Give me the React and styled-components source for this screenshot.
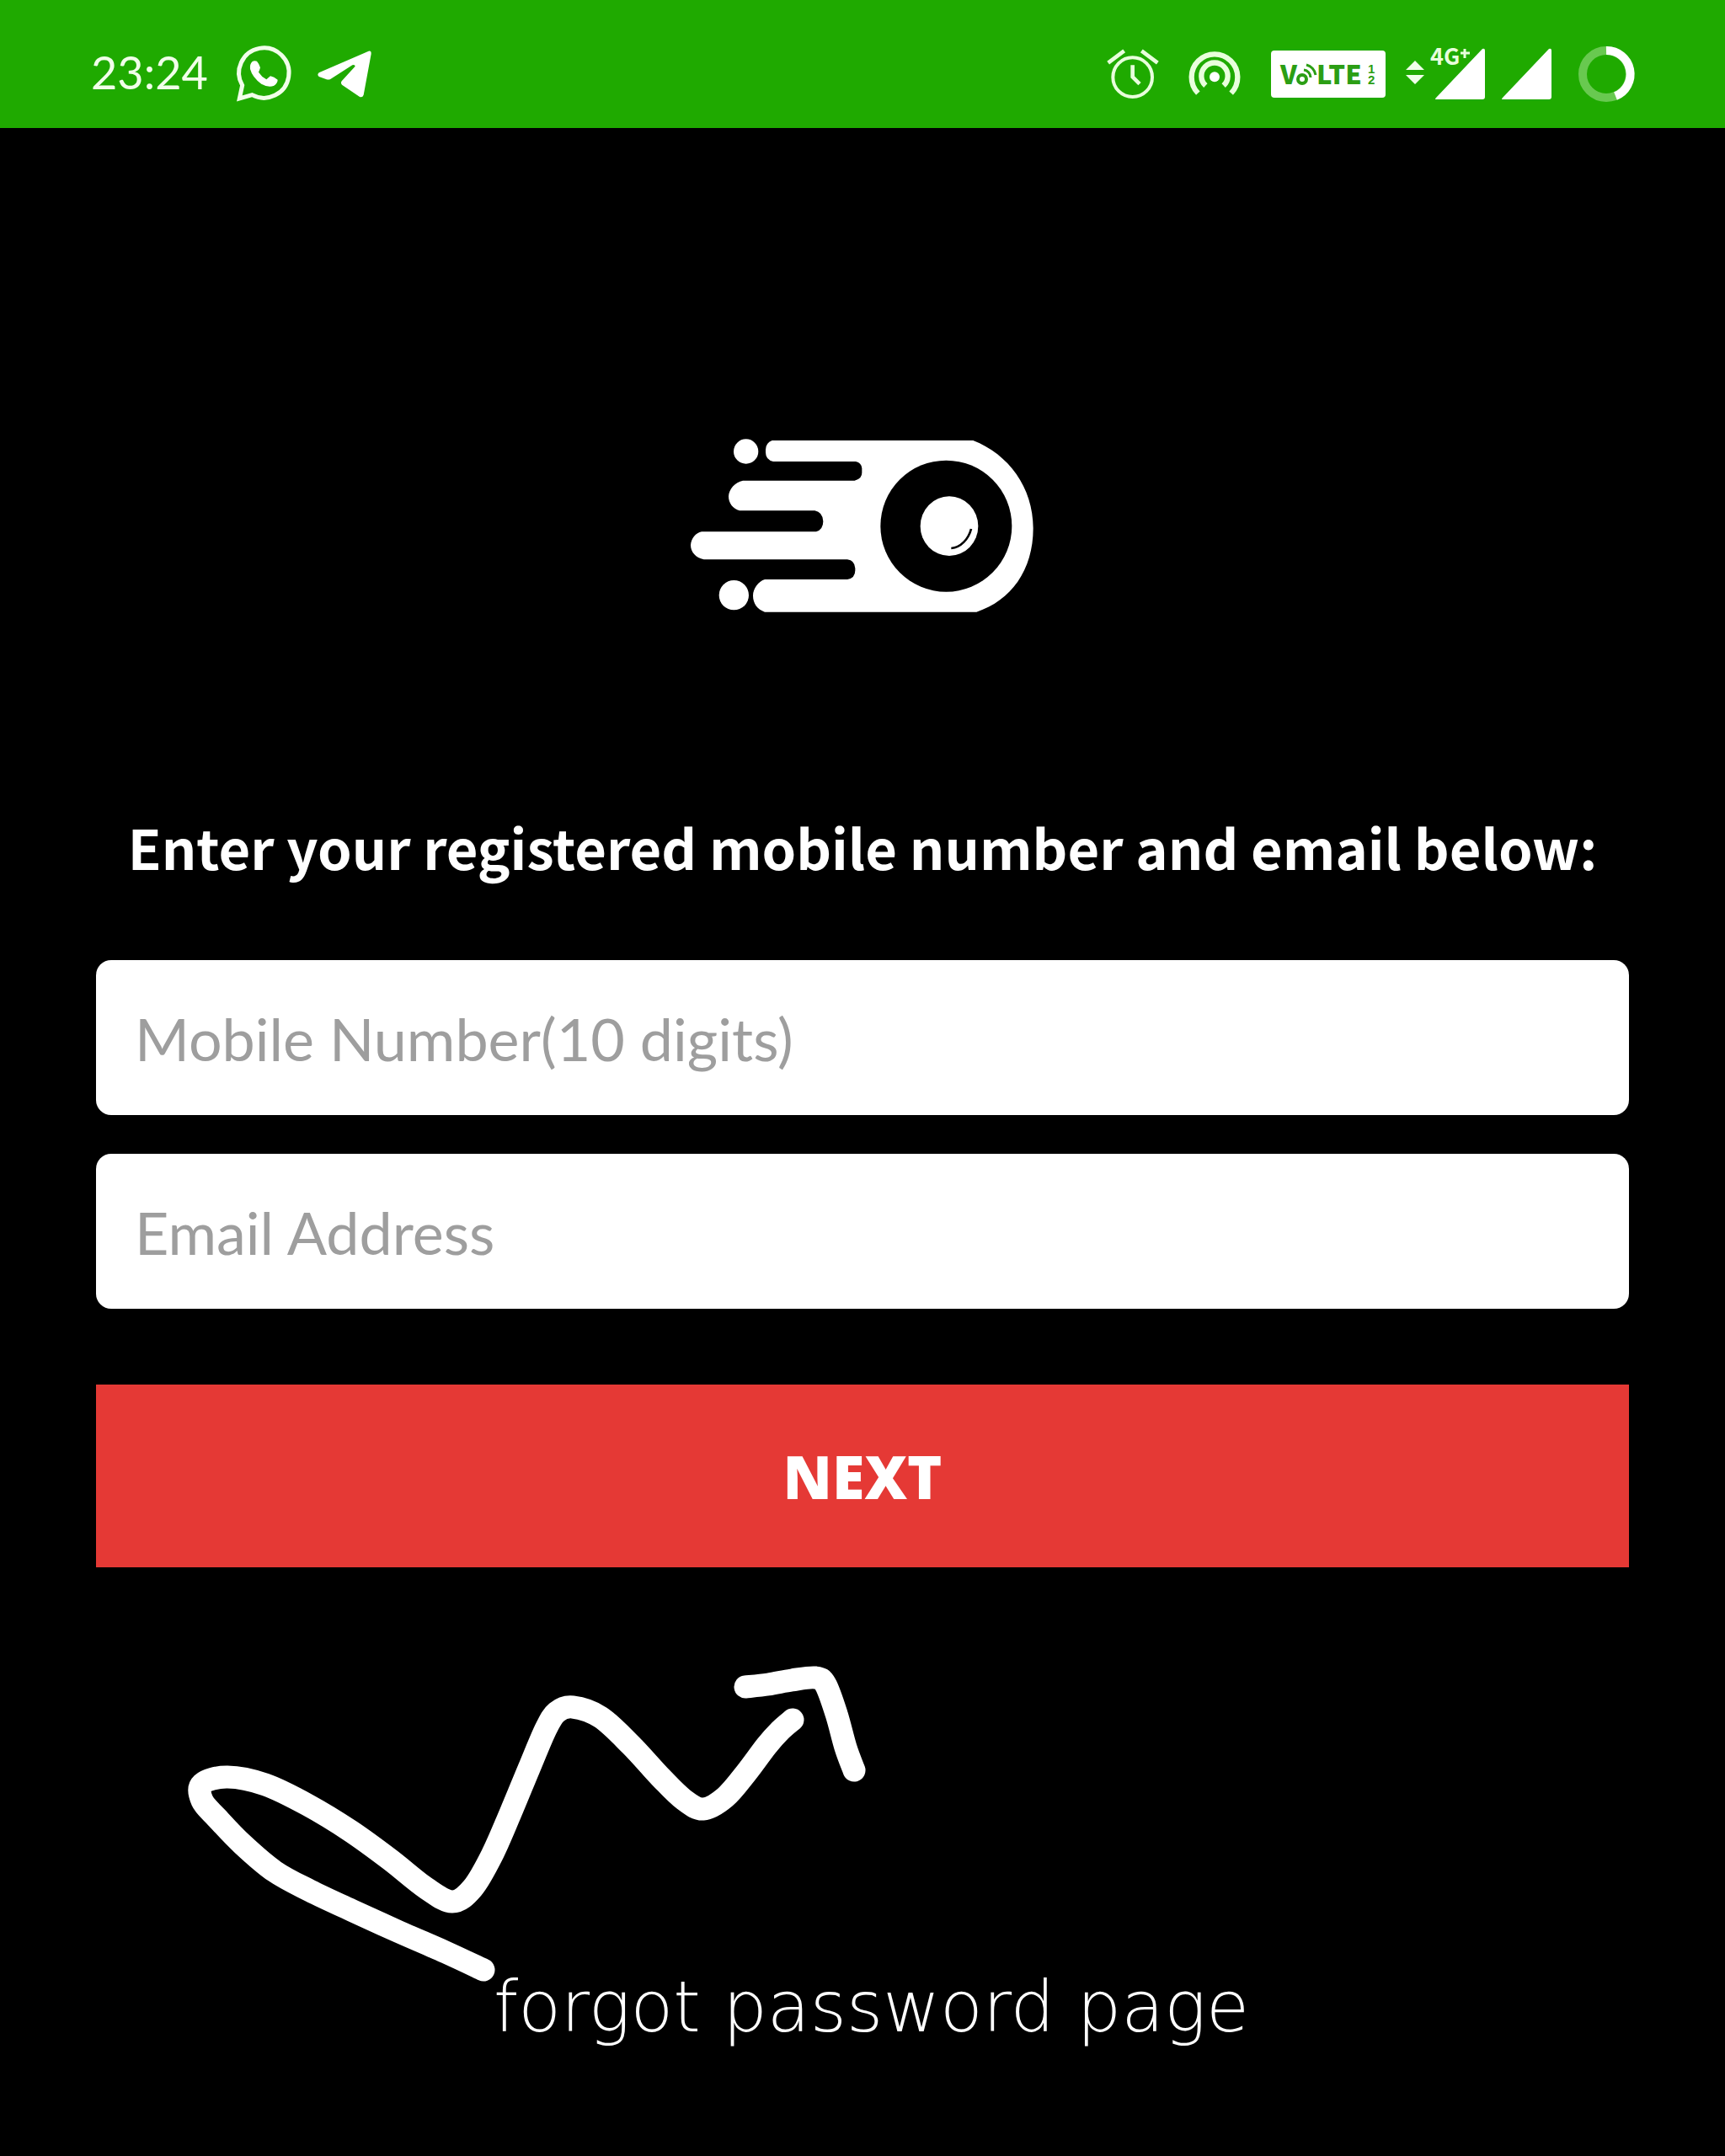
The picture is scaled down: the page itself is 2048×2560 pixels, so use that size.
import React from "react";
import styled, { createGlobalStyle } from "styled-components";

const FONT = 'Lato, "Noto Sans", sans-serif';
const HEADING_FONT = '"Noto Sans CJK SC", "Noto Sans", sans-serif';

const GlobalStyle = createGlobalStyle`
  *, *::before, *::after { box-sizing: border-box; }
  body { margin: 0; background: #000; color: #fff; font-family: ${FONT}; }
`;

const Screen = styled.div`
  display: flex;
  flex-direction: column;
  min-height: 100vh;
  background: #000;
`;

const StatusBar = styled.header`
  display: flex;
  align-items: center;
  justify-content: space-between;
  padding: 24px 108px 0;
  height: 152px;
  background: #1faa00;
`;

const StatusGroup = styled.div`
  display: flex;
  align-items: center;
  gap: ${(p) => p.$gap}px;
`;

const Clock = styled.time`
  padding-bottom: 4px;
  font-size: 54px;
  font-weight: 400;
  line-height: 64px;
  color: #f1ffe9;
`;

const Glyph = styled.svg`
  display: block;
  flex: none;
  width: ${(p) => p.$w}px;
  height: ${(p) => p.$h}px;
  overflow: visible;
`;

const Content = styled.main`
  display: flex;
  flex-direction: column;
  padding: 368px 114px 0;
`;

const LogoRow = styled.div`
  display: flex;
  justify-content: center;
`;

const Form = styled.form`
  display: flex;
  flex-direction: column;
  margin-top: 232px;
`;

const Heading = styled.h1`
  margin: 0 0 90px;
  font-family: ${HEADING_FONT};
  font-size: 65px;
  font-weight: 700;
  line-height: 90px;
  text-align: center;
`;

const Fields = styled.div`
  display: flex;
  flex-direction: column;
  gap: 46px;
`;

const Field = styled.input`
  width: 100%;
  height: 184px;
  padding: 2px 46px 0;
  border: 0;
  border-radius: 18px;
  background: #fff;
  color: #222;
  font-family: ${FONT};
  font-size: 70px;
  font-weight: 400;
  &::placeholder { color: #9e9e9e; opacity: 1; }
`;

const NextButton = styled.button`
  height: 217px;
  margin-top: 90px;
  padding: 0;
  border: 0;
  background: #e53935;
  color: #fff;
  font-family: "Open Sans", ${FONT};
  font-size: 70px;
  font-weight: 800;
  cursor: pointer;
`;

const Annotation = styled.figure`
  margin: 109px 0 0 106px;
`;

const Caption = styled.figcaption`
  padding-left: 366px;
  font-family: "DejaVu Sans", sans-serif;
  font-size: 83px;
  font-weight: 200;
  line-height: 88px;
`;

/* Smooth curve through a list of points. */
const smooth = (pts) =>
  pts.slice(0, -1).reduce((d, p, i) => {
    const a = pts[i - 1] || p;
    const n = pts[i + 1];
    const b = pts[i + 2] || n;
    const c1 = [p[0] + (n[0] - a[0]) / 6, p[1] + (n[1] - a[1]) / 6];
    const c2 = [n[0] - (b[0] - p[0]) / 6, n[1] - (b[1] - p[1]) / 6];
    return `${d} C${c1} ${c2} ${n}`;
  }, `M${pts[0]}`);

const SWOOSH = [
  [574, 2339], [529, 2318], [474, 2294], [419, 2269], [368, 2245], [326, 2222],
  [288, 2190], [258, 2159], [240, 2138], [240, 2118], [270, 2110],
  [315, 2119], [365, 2143], [416, 2174], [463, 2208], [506, 2242], [537, 2258],
  [561, 2242], [584, 2203], [606, 2153], [628, 2100], [648, 2053], [661, 2033],
  [680, 2027], [713, 2039], [749, 2072], [785, 2111], [812, 2137], [835, 2148],
  [861, 2134], [886, 2105], [910, 2073], [926, 2055], [941, 2042],
];

const HEAD = [
  [885, 2003], [912, 2000], [940, 1995], [968, 1992], [980, 2000], [993, 2035], [1004, 2075], [1014, 2102],
];

const WhatsApp = () => (
  <Glyph $w={64} $h={66} viewBox="602 74 192 198" aria-hidden="true">
    <path d="M622 213A89 89 0 1 1 657 247L612 260Z" fill="none" stroke="#f1ffe9" strokeWidth="15" />
    <path d="M657 129Q648 138 650 155Q658 185 690 208Q715 222 735 214Q748 205 748 193Q735 182 722 180L708 192Q690 182 680 166Q684 158 686 150Q682 136 674 127Q664 124 657 129Z" fill="#fff" />
  </Glyph>
);

const Telegram = () => (
  <Glyph $w={64} $h={56} viewBox="888 96 192 168" aria-hidden="true">
    <path d="M893 175L1070 98Q1080 96 1079 108L1052 254Q1048 265 1037 260L975 218Q969 212 974 205L1022 152Q1021 145 1012 148L935 197Q928 201 920 199L893 189Q885 182 893 175Z" fill="#fff" />
  </Glyph>
);

const Alarm = () => (
  <Glyph $w={60} $h={60} viewBox="80 88 180 180" aria-hidden="true">
    <g fill="none" stroke="#e8ffdc" strokeWidth="12">
      <circle cx="169" cy="189" r="70" />
      <path d="M82 138L139 95M201 95L258 138" strokeWidth="14" />
      <path d="M169 146V188L194 213" strokeWidth="14" />
    </g>
  </Glyph>
);

const Hotspot = () => (
  <Glyph $w={62} $h={60} viewBox="369 84 186 180" aria-hidden="true">
    <g fill="none" stroke="#e8ffdc" strokeWidth="19">
      <path d="M403 242A82 82 0 1 1 521 242" />
      <path d="M430 215A47 47 0 1 1 494 215" />
    </g>
    <circle cx="462" cy="184" r="18" fill="#fff" />
  </Glyph>
);

const VoLte = () => (
  <Glyph $w={136} $h={56} viewBox="0 0 136 56" role="img" aria-label="VoLTE 1 2">
    <rect width="136" height="56" rx="4" fill="#fff" />
    <g fill="#2b9e14" fontFamily="Noto Sans CJK SC, sans-serif" fontWeight="900">
      <text x="11" y="40" fontSize="31">V</text>
      <text x="54" y="40" fontSize="31">LTE</text>
      <text fontFamily="Liberation Sans, sans-serif" fontWeight="700" fontSize="15">
        <tspan x="115" y="27">1</tspan>
        <tspan x="115" y="40">2</tspan>
      </text>
    </g>
    <g fill="none" stroke="#2b9e14">
      <circle cx="37" cy="34" r="5" strokeWidth="4" />
      <path d="M39 23A9 9 0 0 1 47 32M42 17A15 15 0 0 1 53 29" strokeWidth="3" />
    </g>
  </Glyph>
);

const Signal4G = () => (
  <Glyph $w={94} $h={60} viewBox="0 0 94 60" role="img" aria-label="4G+ signal">
    <path d="M11 14L22 25H0ZM0 31H22L11 42Z" fill="#f1ffe9" />
    <text x="29" y="19" fontSize="27" fontWeight="700" fontFamily="Noto Sans CJK SC, sans-serif" fill="#e8ffdc">4G</text>
    <path d="M70 0V11M65 5H76" stroke="#e8ffdc" strokeWidth="3" />
    <path d="M91 0Q94 -1 94 2V57Q94 60 91 60H36Q34 60 36 58Z" fill="#fff" />
  </Glyph>
);

const Signal = () => (
  <Glyph $w={59} $h={60} viewBox="0 0 59 60" aria-hidden="true">
    <path d="M56 0Q59 -1 59 2V57Q59 60 56 60H1Q-1 60 1 58Z" fill="#fff" />
  </Glyph>
);

const Battery = () => (
  <Glyph $w={66} $h={66} viewBox="0 0 66 66" aria-hidden="true">
    <circle cx="33" cy="33" r="28" fill="none" stroke="#68c950" strokeWidth="10" />
    <path d="M33 5A28 28 0 0 1 44 59" fill="none" stroke="#fff" strokeWidth="10" />
  </Glyph>
);

const Logo = () => (
  <Glyph $w={410} $h={208} viewBox="55 60 1230 624" role="img" aria-label="Comet logo">
    <g fill="#fff">
      <circle cx="255" cy="108" r="44" />
      <circle cx="212" cy="620" r="53" />
      <path d="M348 69H1064C1190 118 1278 236 1278 382C1278 530 1200 640 1076 680H322C296 672 280 650 280 622C280 596 300 570 322 564H616Q644 560 644 532V524Q642 496 616 493H105C76 488 58 466 58 442C60 418 76 398 97 394H505Q530 386 530 357Q528 324 500 319H232C208 312 193 292 193 268C194 242 216 218 244 212H642Q668 206 668 184V168Q666 148 645 144H352Q325 138 325 112V102Q325 78 348 69Z" />
    </g>
    <circle cx="968" cy="374" r="234" fill="#000" />
    <ellipse cx="979" cy="374" rx="103" ry="106" fill="#fff" />
    <path d="M1057 384C1048 420 1020 450 986 453" fill="none" stroke="#000" strokeWidth="8" />
  </Glyph>
);

export default function App() {
  return (
    <Screen>
      <GlobalStyle />
      <StatusBar>
        <StatusGroup $gap={34}>
          <Clock>23:24</Clock>
          <StatusGroup $gap={32}>
            <WhatsApp />
            <Telegram />
          </StatusGroup>
        </StatusGroup>
        <StatusGroup $gap={32}>
          <StatusGroup $gap={24}>
            <StatusGroup $gap={36}>
              <Alarm />
              <Hotspot />
              <VoLte />
            </StatusGroup>
            <StatusGroup $gap={20}>
              <Signal4G />
              <Signal />
            </StatusGroup>
          </StatusGroup>
          <Battery />
        </StatusGroup>
      </StatusBar>
      <Content>
        <LogoRow>
          <Logo />
        </LogoRow>
        <Form onSubmit={(e) => e.preventDefault()}>
          <Heading>Enter your registered mobile number and email below:</Heading>
          <Fields>
            <Field type="tel" aria-label="Mobile Number" placeholder="Mobile Number(10 digits)" />
            <Field type="email" aria-label="Email Address" placeholder="Email Address" />
          </Fields>
          <NextButton type="submit">NEXT</NextButton>
        </Form>
        <Annotation>
          <Glyph $w={820} $h={370} viewBox="220 1970 820 370" aria-hidden="true">
            <g fill="none" stroke="#fff" strokeWidth="27" strokeLinecap="round" strokeLinejoin="round">
              <path d={smooth(SWOOSH)} />
              <path d={smooth(HEAD)} />
            </g>
          </Glyph>
          <Caption>forgot password page</Caption>
        </Annotation>
      </Content>
    </Screen>
  );
}
